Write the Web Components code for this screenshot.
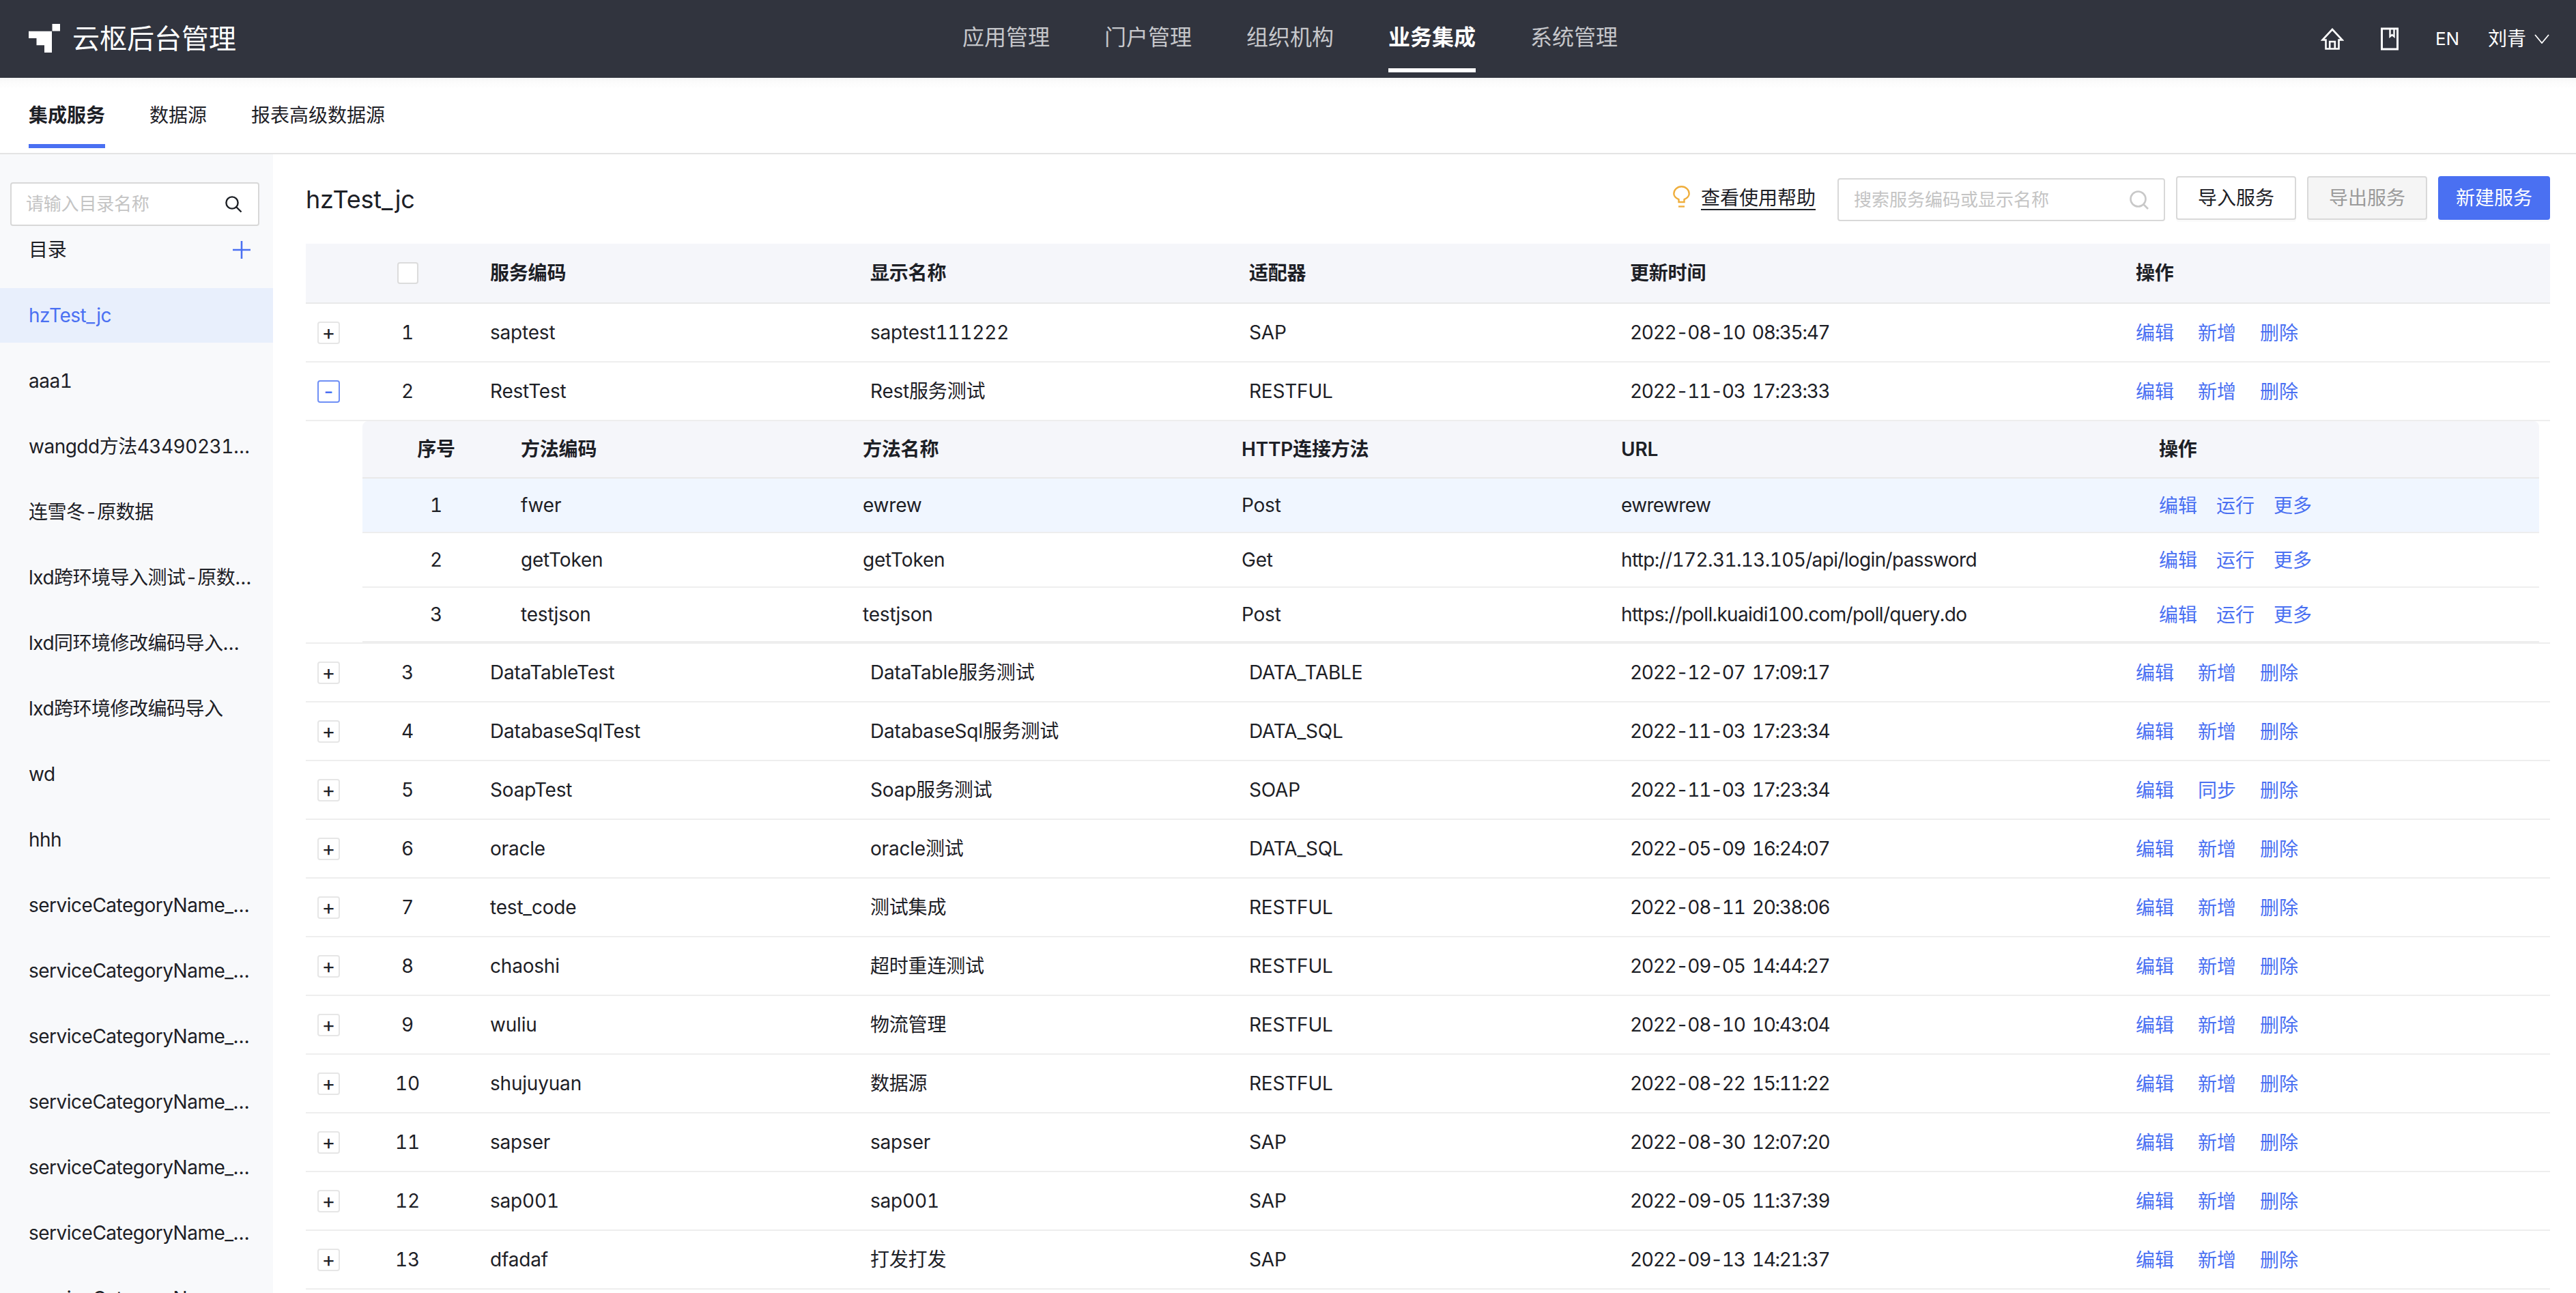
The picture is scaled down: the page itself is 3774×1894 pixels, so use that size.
<!DOCTYPE html>
<html lang="zh-CN">
<head>
<meta charset="utf-8">
<title>云枢后台管理</title>
<style>
  html, body { margin: 0; height: 100%; overflow: hidden; background: #fff; }
  body { font: 400 28px/40px Inter, "Noto Sans CJK SC", sans-serif; color: #1d2026; letter-spacing: -0.2px; font-variant-numeric: tabular-nums; }
</style>
</head>
<body>
<console-page></console-page>

<script>
// top dark bar
class AppHeader extends HTMLElement {
  constructor() {
    super();
    const nav = ['应用管理', '门户管理', '组织机构', '业务集成', '系统管理'];
    this.attachShadow({ mode: 'open' }).innerHTML = `
    <style>
      :host { display: flex; align-items: center; height: 114px; background: #31343e; color: #fff; padding: 0 39px 0 42px; box-sizing: border-box; letter-spacing: 0; }
      .brand { flex: 0 0 1368px; display: flex; align-items: center; gap: 18px; font-size: 40px; margin-top: -1px; }
      .brand svg { display: block; margin-top: -2px; }
      nav { display: flex; gap: 80px; align-self: flex-start; }
      nav a { display: block; height: 106px; box-sizing: border-box; padding-top: 10px; line-height: 90px; font-size: 32px; color: #c6c7cb; border-bottom: 6px solid transparent; }
      nav a.on { color: #fff; font-weight: 700; border-bottom-color: #fff; }
      .right { margin-left: auto; display: flex; align-items: center; }
      .right svg { display: block; }
      .book { margin-left: 54px; }
      .en { margin-left: 54px; font-size: 26px; width: 35px; }
      .user { margin-left: 42px; }
      .arrow { margin-left: 12px; }
    </style>
    <div class="brand">
      <svg width="46" height="42" viewBox="0 0 46 42"><path fill="#fff" d="M34.5 0H46v10.600H34.500zM0 10.700h34V42H23V31.300H11.500V21H0z"/></svg>
      <span>云枢后台管理</span>
    </div>
    <nav>${nav.map(n => `<a class="${n === '业务集成' ? 'on' : ''}">${n}</a>`).join('')}</nav>
    <div class="right">
      <svg width="34" height="32" viewBox="0 0 34 32" fill="none" stroke="#fff" stroke-width="2.6" stroke-linejoin="miter">
        <path d="M17 2 2.500 17.500H7.500V30.500H26.500V17.500H31.500Z"/><path d="M13.200 30.500V20H20.800V30.500"/>
      </svg>
      <svg class="book" width="26" height="34" viewBox="0 0 26 34" fill="none" stroke="#fff" stroke-width="3">
        <path d="M1.500 2H24.500V32H1.500Z"/><path stroke-width="2.400" d="M13.500 2V13.500L16.500 11L19.500 13.500V2"/>
      </svg>
      <span class="en">EN</span>
      <span class="user">刘青</span>
      <svg class="arrow" width="22" height="14" viewBox="0 0 22 14" fill="none" stroke="#fff" stroke-width="1.800"><path d="M1 1 11 13 21 1"/></svg>
    </div>`;
  }
}

class SubTabs extends HTMLElement {
  constructor() {
    super();
    this.attachShadow({ mode: 'open' }).innerHTML = `
    <style>
      :host { display: flex; align-items: flex-start; gap: 65px; height: 112px; box-sizing: border-box; padding-left: 42px; border-bottom: 2px solid #e4e4e4; background: linear-gradient(#f4f4f4, #fbfbfb 5px, #fff 16px); letter-spacing: 0; }
      a { display: block; height: 103px; box-sizing: border-box; padding-top: 9px; line-height: 92px; border-bottom: 6px solid transparent; }
      a.on { font-weight: 700; border-bottom-color: #4a70f2; }
    </style>
    <a class="on">集成服务</a><a>数据源</a><a>报表高级数据源</a>`;
  }
}

class DirSidebar extends HTMLElement {
  constructor() {
    super();
    const long = 'serviceCategoryName_2022';
    const items = ['hzTest_jc', 'aaa1', 'wangdd方法4349023105', '连雪冬-原数据', 'lxd跨环境导入测试-原数据',
      'lxd同环境修改编码导入测试', 'lxd跨环境修改编码导入', 'wd', 'hhh', long, long, long, long, long, long, long];
    this.attachShadow({ mode: 'open' }).innerHTML = `
    <style>
      :host { display: block; flex: 0 0 400px; background: #f8f9fb; padding-top: 41px; overflow: hidden; box-sizing: border-box; }
      .search { display: flex; align-items: center; justify-content: space-between; width: 365px; height: 64px; margin-left: 15px; box-sizing: border-box; border: 2px solid #d8d8d8; border-radius: 4px; background: #fff; padding: 0 23px 0 21px; font-size: 26px; color: #c4c4c4; }
      .head { display: flex; align-items: center; justify-content: space-between; height: 70px; padding: 0 33px 0 42px; margin-bottom: 21px; }
      .head svg { display: block; margin-top: -1px; }
      ul { list-style: none; margin: 0; padding: 0; display: flex; flex-direction: column; gap: 16px; }
      li { height: 80px; line-height: 80px; padding-left: 42px; padding-right: 30px; white-space: nowrap; overflow: hidden; text-overflow: ellipsis; flex: none; letter-spacing: -0.5px; }
      li.on { background: #e8effc; color: #4a70f2; }
    </style>
    <div class="search">
      <span>请输入目录名称</span>
      <svg width="26" height="26" viewBox="0 0 26 26" fill="none" stroke="#1d2026" stroke-width="2.400"><circle cx="11" cy="11" r="8.600"/><path d="M17.500 17.500 24.500 24.500"/></svg>
    </div>
    <div class="head">
      <span>目录</span>
      <svg width="26" height="26" viewBox="0 0 26 26" stroke="#4a70f2" stroke-width="2.600"><path d="M13 0V26M0 13H26"/></svg>
    </div>
    <ul>${items.map((t, i) => `<li class="${i === 0 ? 'on' : ''}">${t}</li>`).join('')}</ul>`;
  }
}

class ToolButton extends HTMLElement {
  constructor() {
    super();
    this.attachShadow({ mode: 'open' }).innerHTML = `
    <style>
      :host { display: flex; align-items: center; justify-content: center; flex: none; width: 176px; height: 64px; box-sizing: border-box; border: 2px solid #d9d9d9; border-radius: 4px; background: #fff; box-shadow: 0 3px 0 #fafafa; letter-spacing: 0; }
      :host([kind="off"]) { background: #f5f5f5; color: #9b9b9b; }
      :host([kind="primary"]) { width: 164px; background: #4a70f2; border-color: #4a70f2; color: #fff; }
    </style>
    <slot></slot>`;
  }
}

class PageToolbar extends HTMLElement {
  constructor() {
    super();
    this.attachShadow({ mode: 'open' }).innerHTML = `
    <style>
      :host { display: flex; align-items: flex-start; height: 131px; box-sizing: border-box; padding-top: 32px; gap: 16px; }
      h1 { margin: 2px auto 0 0; font-size: 36px; line-height: 64px; font-weight: 400; }
      .bulb { display: block; margin-top: 14px; }
      .help { line-height: 42px; margin-top: 11px; height: 37px; border-bottom: 2px solid #1d2026; letter-spacing: 0; }
      .search { display: flex; align-items: center; justify-content: space-between; width: 480px; height: 63px; margin: 3px 0 0 16px; box-sizing: border-box; border: 2px solid #d8d8d8; border-radius: 4px; padding: 0 22px 0 22px; font-size: 26px; color: #c4c4c4; letter-spacing: 0; }
    </style>
    <h1><slot></slot></h1>
    <svg class="bulb" width="25" height="32" viewBox="0 0 25 32" fill="none" stroke="#efae3d" stroke-width="2.400">
      <path d="M8.500 24v-3.800C4 18 1.300 15.600 1.300 11.700a11.200 10.400 0 0 1 22.400 0c0 3.900-2.700 6.300-7.200 8.500V24z"/><path d="M8 30.500h9"/>
    </svg>
    <span class="help">查看使用帮助</span>
    <div class="search">
      <span>搜索服务编码或显示名称</span>
      <svg width="28" height="28" viewBox="0 0 28 28" fill="none" stroke="#c8c8c8" stroke-width="2.600"><circle cx="12.500" cy="12.500" r="11"/><path d="M20.500 20.500 27 27"/></svg>
    </div>
    <tool-button>导入服务</tool-button>
    <tool-button kind="off">导出服务</tool-button>
    <tool-button kind="primary">新建服务</tool-button>`;
  }
}

class RowOps extends HTMLElement {
  constructor() {
    super();
    const labels = this.getAttribute('labels').split(',');
    this.attachShadow({ mode: 'open' }).innerHTML = `
    <style>
      :host { display: flex; gap: var(--ops-gap, 35px); color: #4a70f2; letter-spacing: 0; padding-top: 2px; }
    </style>
    ${labels.map(l => `<span>${l}</span>`).join('')}`;
  }
}

// the rows opened under a service
class MethodTable extends HTMLElement {
  constructor() {
    super();
    const rows = [
      ['1', 'fwer', 'ewrew', 'Post', 'ewrewrew'],
      ['2', 'getToken', 'getToken', 'Get', 'http://172.31.13.105/api/login/password'],
      ['3', 'testjson', 'testjson', 'Post', 'https://poll.kuaidi100.com/poll/query.do']
    ];
    this.attachShadow({ mode: 'open' }).innerHTML = `
    <style>
      :host { display: block; margin: 0 16px 0 83px; --ops-gap: 28px; }
      .row { display: grid; grid-template-columns: 232px 501px 555px 556px 788px 557px; align-items: center; height: 80px; box-sizing: border-box; border-bottom: 2px solid #eeeeee; }
      .head { height: 84px; background: #f5f6fa; border-bottom-color: #e9e9e9; font-weight: 600; border-radius: 8px 8px 0 0; }
      .hi { background: #f0f6ff; }
      .idx { text-align: center; padding-right: 16px; }
      .url { letter-spacing: -0.65px; }
    </style>
    <div class="row head"><span class="idx">序号</span><span>方法编码</span><span>方法名称</span><span>HTTP连接方法</span><span>URL</span><span>操作</span></div>
    ${rows.map((r, i) => `<div class="row ${i === 0 ? 'hi' : ''}">
      <span class="idx">${r[0]}</span><span>${r[1]}</span><span>${r[2]}</span><span>${r[3]}</span><span class="url">${r[4]}</span>
      <row-ops labels="编辑,运行,更多"></row-ops>
    </div>`).join('')}`;
  }
}

class ServiceTable extends HTMLElement {
  constructor() {
    super();
    const data = [
      ['saptest', 'saptest111222', 'SAP', '2022-08-10 08:35:47'],
      ['RestTest', 'Rest服务测试', 'RESTFUL', '2022-11-03 17:23:33'],
      ['DataTableTest', 'DataTable服务测试', 'DATA_TABLE', '2022-12-07 17:09:17'],
      ['DatabaseSqlTest', 'DatabaseSql服务测试', 'DATA_SQL', '2022-11-03 17:23:34'],
      ['SoapTest', 'Soap服务测试', 'SOAP', '2022-11-03 17:23:34'],
      ['oracle', 'oracle测试', 'DATA_SQL', '2022-05-09 16:24:07'],
      ['test_code', '测试集成', 'RESTFUL', '2022-08-11 20:38:06'],
      ['chaoshi', '超时重连测试', 'RESTFUL', '2022-09-05 14:44:27'],
      ['wuliu', '物流管理', 'RESTFUL', '2022-08-10 10:43:04'],
      ['shujuyuan', '数据源', 'RESTFUL', '2022-08-22 15:11:22'],
      ['sapser', 'sapser', 'SAP', '2022-08-30 12:07:20'],
      ['sap001', 'sap001', 'SAP', '2022-09-05 11:37:39'],
      ['dfadaf', '打发打发', 'SAP', '2022-09-13 14:21:37']
    ];
    const rows = data.map((r, i) => {
      const open = i === 1;
      const ops = r[0] === 'SoapTest' ? '编辑,同步,删除' : '编辑,新增,删除';
      return `<div class="row">
        <span class="exp ${open ? 'open' : ''}">${open ? '-' : '+'}</span>
        <span class="idx">${i + 1}</span>
        <span>${r[0]}</span><span>${r[1]}</span><span>${r[2]}</span><span class="date">${r[3]}</span>
        <row-ops labels="${ops}"></row-ops>
      </div>${open ? '<div class="sub"><method-table></method-table></div>' : ''}`;
    }).join('');
    this.attachShadow({ mode: 'open' }).innerHTML = `
    <style>
      :host { display: block; }
      .row { display: grid; grid-template-columns: 96px 174px 557px 555px 558px 741px 607px; align-items: center; height: 86px; box-sizing: border-box; border-bottom: 2px solid #eeeeee; }
      .head { height: 88px; background: #f5f6fa; border-bottom-color: #e9e9e9; font-weight: 600; }
      .idx { text-align: center; padding-right: 68px; }
      .date { letter-spacing: -1.3px; word-spacing: 4px; }
      .exp { display: flex; align-items: center; justify-content: center; width: 33px; height: 33px; margin-left: 17px; box-sizing: border-box; border: 2px solid #e6e6e6; border-radius: 4px; font-size: 30px; line-height: 1; background: #fff; }
      .exp.open { border-color: #6f8ff5; color: #4a70f2; }
      .check { display: block; width: 31px; height: 32px; box-sizing: border-box; border: 2px solid #dcdcdc; border-radius: 4px; background: #fff; justify-self: center; margin-right: 68px; }
      .sub { border-bottom: 2px solid #eeeeee; }
    </style>
    <div class="row head"><span></span><span class="check"></span><span>服务编码</span><span>显示名称</span><span>适配器</span><span>更新时间</span><span>操作</span></div>
    ${rows}`;
  }
}

class ConsolePage extends HTMLElement {
  constructor() {
    super();
    this.attachShadow({ mode: 'open' }).innerHTML = `
    <style>
      :host { display: flex; flex-direction: column; height: 1894px; overflow: hidden; }
      .body { flex: 1; display: flex; min-height: 0; }
      main { flex: 1; min-width: 0; padding: 0 38px 0 48px; }
    </style>
    <app-header></app-header>
    <sub-tabs></sub-tabs>
    <div class="body">
      <dir-sidebar></dir-sidebar>
      <main>
        <page-toolbar>hzTest_jc</page-toolbar>
        <service-table></service-table>
      </main>
    </div>`;
  }
}

customElements.define('row-ops', RowOps);
customElements.define('tool-button', ToolButton);
customElements.define('method-table', MethodTable);
customElements.define('service-table', ServiceTable);
customElements.define('page-toolbar', PageToolbar);
customElements.define('dir-sidebar', DirSidebar);
customElements.define('sub-tabs', SubTabs);
customElements.define('app-header', AppHeader);
customElements.define('console-page', ConsolePage);
</script>
</body>
</html>
